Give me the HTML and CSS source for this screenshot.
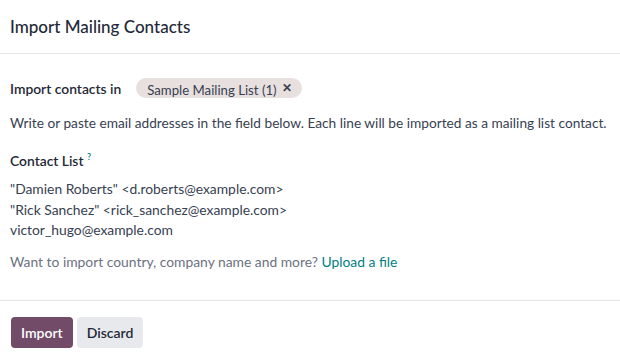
FILE: index.html
```html
<!DOCTYPE html>
<html>
<head>
<meta charset="utf-8">
<link rel="stylesheet" href="styles.css">
</head>
<body>
<div class="modal">
  <header class="modal-header">
    <h4 class="modal-title">Import Mailing Contacts</h4>
  </header>
  <main class="modal-body">
    <div class="row-field">
      <span class="field-label">Import contacts in</span>
      <span class="tag"><span class="tag-text">Sample Mailing List (1)</span><span class="tag-x">✕</span></span>
    </div>
    <p class="desc">Write or paste email addresses in the field below. Each line will be imported as a mailing list contact.</p>
    <div class="field-label cl">Contact List <sup class="help">?</sup></div>
    <div class="contacts">
      <div>"Damien Roberts" &lt;d.roberts@example.com&gt;</div>
      <div>"Rick Sanchez" &lt;rick_sanchez@example.com&gt;</div>
      <div>victor_hugo@example.com</div>
    </div>
    <p class="hint">Want to import country, company name and more? <a class="link">Upload a file</a></p>
  </main>
  <footer class="modal-footer">
    <button class="btn btn-primary">Import</button>
    <button class="btn btn-secondary">Discard</button>
  </footer>
</div>
</body>
</html>
```
FILE: styles.css
```css
html, body {
  margin: 0;
  padding: 0;
  background: #fff;
}
body {
  font-family: "Lato", "Noto Sans", sans-serif;
  font-size: 13.85px;
  color: #374151;
  width: 620px;
  height: 359px;
  overflow: hidden;
}
.modal-header {
  height: 54px;
  box-sizing: border-box;
  border-bottom: 1px solid #e3e5e8;
  display: flex;
  align-items: center;
  padding: 0 10px;
}
.modal-title {
  margin: 0;
  font-size: 17px;
  font-weight: 500;
  color: #1f2937;
}
.modal-body {
  padding: 24px 10px 0;
  height: 247px;
  box-sizing: border-box;
  border-bottom: 1px solid #e3e5e8;
}
.row-field {
  display: flex;
  align-items: center;
  gap: 15px;
  height: 20px;
}
.field-label {
  font-weight: 600;
  color: #1f2937;
}
.tag {
  display: inline-flex;
  align-items: center;
  height: 20px;
  background: #e8e0df;
  border-radius: 10px;
  padding: 0 10px 0 11px;
  overflow: hidden;
  color: #374151;
  font-size: 13.2px;
}
.tag-text {
  line-height: 20px;
  height: 20px;
  padding-top: 2px;
  overflow: hidden;
  box-sizing: border-box;
}
.tag-x {
  margin-left: 5px;
  font-size: 11.5px;
  font-weight: 700;
}
.desc {
  margin: 15px 0 0;
  line-height: 20px;
  white-space: nowrap;
  font-size: 13.7px;
}
.cl {
  margin-top: 14px;
  line-height: 20px;
}
.help {
  color: #017e84;
  font-size: 9px;
  font-weight: 600;
  vertical-align: 6px;
}
.contacts {
  margin-top: 8px;
  line-height: 20.5px;
}
.hint {
  margin: 11px 0 0;
  color: #6b7280;
  line-height: 20px;
}
.link {
  color: #017e84;
}
.modal-footer {
  display: flex;
  gap: 4px;
  padding: 16px 11px;
}
.btn {
  font-family: inherit;
  font-size: 14px;
  font-weight: 600;
  border: none;
  border-radius: 4px;
  height: 31px;
  padding: 0 10px;
  cursor: pointer;
}
.btn-primary {
  background: #714b67;
  color: #fff;
}
.btn-secondary {
  background: #e7e9ed;
  color: #1f2937;
}
```
